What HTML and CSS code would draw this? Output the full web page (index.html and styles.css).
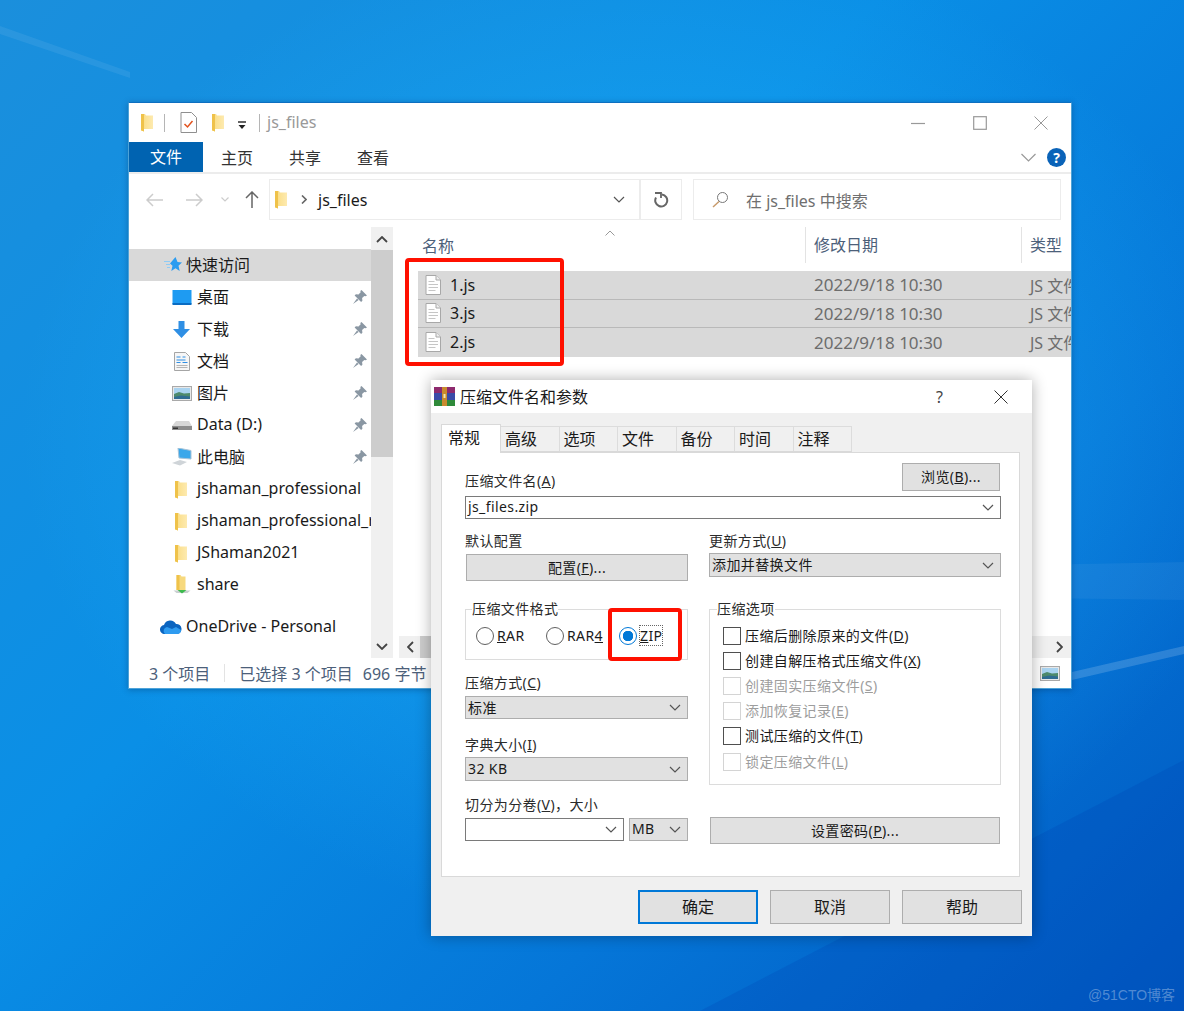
FILE: index.html
```html
<!DOCTYPE html>
<html lang="zh-CN">

<head>
    <meta charset="UTF-8">
    <title>js_files</title>
    <link rel="stylesheet" href="styles.css">
</head>

<body>
    <!-- shared icons -->
    <svg class="defs" width="0" height="0" aria-hidden="true">
        <defs>
            <linearGradient id="folderFill" x1="0" x2="1" y1="0" y2="0">
                <stop offset="0" stop-color="#f2c84e" />
                <stop offset="0.3" stop-color="#fbe08e" />
                <stop offset="1" stop-color="#fdeab0" />
            </linearGradient>
            <symbol id="folder" viewBox="0 0 14 19">
                <path d="M1 1h4l1 1.500h7v13.500H4v2.500l-3-1.300z" fill="url(#folderFill)" />
                <path d="M1 1h3v17.500l-3-1.300z" fill="#efc24a" />
            </symbol>
            <symbol id="pin" viewBox="0 0 14 14">
                <path d="M8.500 0l5.500 5.500-1.500.8-1.200-.4-2.200 2.200.3 2.600-1.300 1.300L1.600 5.500l1.300-1.300 2.600.3 2.200-2.200-.4-1.200zM4 8.400l1.600 1.600L0 14z" fill="#8a97a3" />
            </symbol>
            <symbol id="file" viewBox="0 0 16 20">
                <path d="M1 .5h10l4.500 4.500v14.500H1z" fill="#fff" stroke="#a8a8a8" />
                <path d="M11 .5V5h4.500" fill="#eee" stroke="#a8a8a8" />
                <path d="M3.500 6.500h6M3.500 9.500h9.500M3.500 12.500h9.500M3.500 15.500h7" stroke="#c6c6c6" />
            </symbol>
            <symbol id="picture" viewBox="0 0 20 15">
                <rect x="0.500" y="0.500" width="19" height="14" fill="#e8e8e8" stroke="#a9a9a9" />
                <rect x="2" y="2" width="16" height="11" fill="#a9d3f0" />
                <path d="M2 8l5-2 5 1.500 6-.5v6H2z" fill="#4e8a6c" />
                <path d="M2 11l7-1.500 9 1V13H2z" fill="#2f6c92" />
            </symbol>
            <symbol id="chev" viewBox="0 0 12 7">
                <path d="M1 1l5 5 5-5" fill="none" stroke="#555" stroke-width="1.200" />
            </symbol>
        </defs>
    </svg>

    <svg class="beams" viewBox="0 0 1184 1011" preserveAspectRatio="none" aria-hidden="true">
        <path d="M0 26L130 72V78L0 34z" fill="#fff" opacity="0.07" />
        <path d="M1072 672L1184 646V654L1072 680z" fill="#fff" opacity="0.16" />
        <path d="M1032 565L1184 562V600L1032 598z" fill="#fff" opacity="0.05" />
        <path d="M700 1011L1184 760V1011z" fill="#003fb0" opacity="0.22" />
    </svg>

    <!-- explorer window -->
    <section class="explorer">
        <header class="ex-title">
            <svg class="ic-folder" width="14" height="19"><use href="#folder" /></svg>
            <span class="ex-sep"></span>
            <svg class="ic-check" width="17" height="21" viewBox="0 0 17 21">
                <path d="M1 .5h10.500l5 5v15H1z" fill="#fff" stroke="#8f8f8f" />
                <path d="M4.500 12l3 3 5-6" fill="none" stroke="#e2521d" stroke-width="1.500" />
            </svg>
            <svg class="ic-folder2" width="14" height="19"><use href="#folder" /></svg>
            <svg class="ic-drop" width="10" height="10" viewBox="0 0 10 10">
                <path d="M1 2h8" stroke="#222" stroke-width="1.400" />
                <path d="M1.500 5h7L5 9z" fill="#222" />
            </svg>
            <span class="ex-sep ex-sep2"></span>
            <span class="ex-name">js_files</span>
            <div class="win-btns">
                <svg width="14" height="14" viewBox="0 0 14 14"><path d="M0 7.500h14" stroke="#999" stroke-width="1.200" /></svg>
                <svg width="14" height="14" viewBox="0 0 14 14"><rect x="0.700" y="0.700" width="12.600" height="12.600" fill="none" stroke="#999" stroke-width="1.200" /></svg>
                <svg width="14" height="14" viewBox="0 0 14 14"><path d="M.5.500l13 13M13.500.500l-13 13" stroke="#999" /></svg>
            </div>
        </header>

        <nav class="ribbon">
            <span class="ribbon-file">文件</span>
            <span class="ribbon-tab">主页</span>
            <span class="ribbon-tab">共享</span>
            <span class="ribbon-tab">查看</span>
            <svg class="ribbon-chev" width="15" height="9" viewBox="0 0 15 9"><path d="M.5 1l7 7 7-7" fill="none" stroke="#999" stroke-width="1.200" /></svg>
            <span class="help">?</span>
        </nav>

        <div class="toolbar">
            <svg class="nav-back" width="17" height="14" viewBox="0 0 17 14"><path d="M17 7H1M7 1L1 7l6 6" fill="none" stroke="#ccc" stroke-width="1.500" /></svg>
            <svg class="nav-fwd" width="17" height="14" viewBox="0 0 17 14"><path d="M0 7h16M10 1l6 6-6 6" fill="none" stroke="#ccc" stroke-width="1.500" /></svg>
            <svg class="nav-down" width="8" height="5" viewBox="0 0 8 5"><path d="M.5.500L4 4 7.500.500" fill="none" stroke="#ccc" stroke-width="1.200" /></svg>
            <svg class="nav-up" width="14" height="17" viewBox="0 0 14 17"><path d="M7 17V1M1 7l6-6 6 6" fill="none" stroke="#666" stroke-width="1.500" /></svg>
            <div class="addr">
                <svg width="14" height="19"><use href="#folder" /></svg>
                <svg class="addr-gt" width="6" height="9" viewBox="0 0 6 9"><path d="M1 .5l4 4-4 4" fill="none" stroke="#666" stroke-width="1.600" /></svg>
                <span class="addr-text">js_files</span>
                <svg class="addr-chev" width="12" height="7"><use href="#chev" /></svg>
                <span class="addr-refresh">
                    <svg width="16" height="16" viewBox="0 0 16 16"><path d="M9 2.500a6 6 0 1 1-6 3" fill="none" stroke="#666" stroke-width="2" /><path d="M2 1h6v5" fill="none" stroke="#666" stroke-width="1.800" /></svg>
                </span>
            </div>
            <div class="search">
                <svg width="17" height="17" viewBox="0 0 17 17"><circle cx="10.500" cy="6.500" r="5" fill="none" stroke="#777" /><path d="M7 10.500L1 16" stroke="#c79a6b" stroke-width="1.500" /></svg>
                <span>在 js_files 中搜索</span>
            </div>
        </div>

        <div class="ex-body">
            <aside class="sidebar">
                <div class="nav-row nav-quick">
                    <svg class="nav-ic" width="18" height="16" viewBox="0 0 18 16">
                        <path d="M11.500 0l2 5 4.500.5-3.500 3.300 1.200 5.200-4.200-2.700-4.200 2.700 1.200-5.200-2.500-2.300z" fill="#2b9cf0" />
                        <path d="M0 4.500h6M2 7.500h4M3 10.500h3" stroke="#8fcbf5" stroke-width="1.200" />
                    </svg>
                    <span>快速访问</span>
                </div>
                <div class="nav-row">
                    <svg class="nav-ic" width="19" height="15" viewBox="0 0 19 15"><rect width="19" height="14" fill="#1e9bf2" /><rect y="13" width="19" height="2" fill="#0a6cc2" /></svg>
                    <span>桌面</span>
                    <svg class="pin" width="14" height="14"><use href="#pin" /></svg>
                </div>
                <div class="nav-row">
                    <svg class="nav-ic" width="19" height="17" viewBox="0 0 19 17"><path d="M6 0h6v8h5.500L9 17 .5 8H6z" fill="#2f8fe4" /></svg>
                    <span>下载</span>
                    <svg class="pin" width="14" height="14"><use href="#pin" /></svg>
                </div>
                <div class="nav-row">
                    <svg class="nav-ic" width="19" height="19" viewBox="0 0 19 19"><path d="M2 .5h11l4 4v14H2z" fill="#f6f6f6" stroke="#a5a5a5" /><path d="M4 5h4M10 5h3M4 8h9M10 10.500h5M4 10.500h4" stroke="#2f8fe4" /><path d="M4 13.500h11M4 15.500h11" stroke="#b5b5b5" /></svg>
                    <span>文档</span>
                    <svg class="pin" width="14" height="14"><use href="#pin" /></svg>
                </div>
                <div class="nav-row">
                    <svg class="nav-ic" width="20" height="15"><use href="#picture" /></svg>
                    <span>图片</span>
                    <svg class="pin" width="14" height="14"><use href="#pin" /></svg>
                </div>
                <div class="nav-row">
                    <svg class="nav-ic" width="20" height="11" viewBox="0 0 20 11"><path d="M4 1h13l3 5H0z" fill="#d7d7d7" /><path d="M0 6h20v4H0z" fill="#8d8d8d" /><path d="M1 7.500h5v1.500H1z" fill="#333" /></svg>
                    <span>Data (D:)</span>
                    <svg class="pin" width="14" height="14"><use href="#pin" /></svg>
                </div>
                <div class="nav-row">
                    <svg class="nav-ic" width="20" height="18" viewBox="0 0 20 18"><path d="M6 0l13 2.500V11L7 10z" fill="#3aa7ea" stroke="#a8c4d8" /><path d="M0 15l8-3 7 2-7 3.500z" fill="#cfd4d8" /></svg>
                    <span>此电脑</span>
                    <svg class="pin" width="14" height="14"><use href="#pin" /></svg>
                </div>
                <div class="nav-row">
                    <svg class="nav-ic nav-ic-folder" width="14" height="19"><use href="#folder" /></svg>
                    <span>jshaman_professional</span>
                </div>
                <div class="nav-row">
                    <svg class="nav-ic nav-ic-folder" width="14" height="19"><use href="#folder" /></svg>
                    <span>jshaman_professional_r</span>
                </div>
                <div class="nav-row">
                    <svg class="nav-ic nav-ic-folder" width="14" height="19"><use href="#folder" /></svg>
                    <span>JShaman2021</span>
                </div>
                <div class="nav-row">
                    <svg class="nav-ic" width="17" height="20" viewBox="0 0 17 20"><path d="M3 0h4l1 1.500h4V15H3z" fill="#f7d97e" /><path d="M3 0h3v15H3z" fill="#efc24a" /><path d="M0 15.500l8.500 0 8.500 0-3 2.500H3z" fill="#c9cfd0" /><path d="M4 15h9l-4.500 3.500z" fill="#3dba4e" /></svg>
                    <span>share</span>
                </div>
                <div class="nav-row nav-drive">
                    <svg class="nav-ic" width="22" height="14" viewBox="0 0 22 14"><path d="M5 14a4.500 4.500 0 0 1-1-9 6.500 6.500 0 0 1 12-1 5 5 0 0 1 1 10z" fill="#0a64c0" /><path d="M5 14a4 4 0 0 1 2-7l5 2 4-2 5 3a4 4 0 0 1-4 4z" fill="#2e9bf0" /></svg>
                    <span>OneDrive - Personal</span>
                </div>
            </aside>

            <div class="vscroll">
                <svg width="12" height="7" viewBox="0 0 12 7"><path d="M1 6l5-5 5 5" fill="none" stroke="#444" stroke-width="1.800" /></svg>
                <div class="vthumb"></div>
                <svg class="vscroll-end" width="12" height="7" viewBox="0 0 12 7"><path d="M1 1l5 5 5-5" fill="none" stroke="#444" stroke-width="1.800" /></svg>
            </div>

            <main class="filelist">
                <div class="list-head">
                    <div class="col-name">
                        <svg class="sort-caret" width="10" height="6" viewBox="0 0 10 6"><path d="M.5 5.500L5 1l4.500 4.500" fill="none" stroke="#999" /></svg>
                        名称
                    </div>
                    <div class="col-date">修改日期</div>
                    <div class="col-type">类型</div>
                </div>
                <div class="rows">
                    <div class="file-row">
                        <div class="file-name"><svg width="16" height="20"><use href="#file" /></svg>1.js</div>
                        <div class="file-meta file-date">2022/9/18 10:30</div>
                        <div class="file-meta">JS 文件</div>
                    </div>
                    <div class="file-row">
                        <div class="file-name"><svg width="16" height="20"><use href="#file" /></svg>3.js</div>
                        <div class="file-meta file-date">2022/9/18 10:30</div>
                        <div class="file-meta">JS 文件</div>
                    </div>
                    <div class="file-row">
                        <div class="file-name"><svg width="16" height="20"><use href="#file" /></svg>2.js</div>
                        <div class="file-meta file-date">2022/9/18 10:30</div>
                        <div class="file-meta">JS 文件</div>
                    </div>
                </div>
                <div class="hscroll">
                    <svg width="7" height="12" viewBox="0 0 7 12"><path d="M6 1L1 6l5 5" fill="none" stroke="#444" stroke-width="1.800" /></svg>
                    <div class="hthumb"></div>
                    <svg width="7" height="12" viewBox="0 0 7 12"><path d="M1 1l5 5-5 5" fill="none" stroke="#444" stroke-width="1.800" /></svg>
                </div>
            </main>
        </div>

        <footer class="status">
            <span class="status-count">3 个项目</span>
            <span class="status-sep"></span>
            <span>已选择 3 个项目</span>
            <span class="status-size">696 字节</span>
            <svg class="status-view" width="20" height="15"><use href="#picture" /></svg>
        </footer>
    </section>

    <!-- winrar dialog -->
    <section class="dialog">
        <header class="dlg-title">
            <svg width="21" height="19" viewBox="0 0 21 19">
                <rect width="21" height="6" fill="#8e2a6e" />
                <rect y="6" width="21" height="7" fill="#3a4aa8" />
                <rect y="13" width="21" height="6" fill="#2f8a3a" />
                <rect x="8" width="5" height="19" fill="#c98a2e" />
                <rect x="9.500" y="7" width="2" height="4" fill="#f3e6b0" />
            </svg>
            <span class="dlg-name">压缩文件名和参数</span>
            <span class="dlg-help">?</span>
            <svg class="dlg-close" width="14" height="14" viewBox="0 0 14 14"><path d="M.5.500l13 13M13.500.500l-13 13" stroke="#333" /></svg>
        </header>

        <div class="tabs">
            <span class="tab tab-on">常规</span>
            <span class="tab">高级</span>
            <span class="tab">选项</span>
            <span class="tab">文件</span>
            <span class="tab">备份</span>
            <span class="tab">时间</span>
            <span class="tab">注释</span>
        </div>

        <div class="panel">
            <div class="name-head">
                <label class="lbl">压缩文件名(<u>A</u>)</label>
                <button class="btn btn-browse" type="button">浏览(<u>B</u>)...</button>
            </div>
            <div class="combo combo-name">
                <span>js_files.zip</span>
                <svg width="12" height="7"><use href="#chev" /></svg>
            </div>

            <div class="cols">
                <div class="col">
                    <label class="lbl">默认配置</label>
                    <button class="btn btn-config" type="button">配置(<u>F</u>)...</button>

                    <fieldset class="group group-format">
                        <legend>压缩文件格式</legend>
                        <div class="radios">
                            <span class="radio radio-rar"><i></i><span><u>R</u>AR</span></span>
                            <span class="radio radio-rar4"><i></i><span>RAR<u>4</u></span></span>
                            <span class="radio radio-on"><i></i><span class="focus"><u>Z</u>IP</span></span>
                        </div>
                    </fieldset>

                    <label class="lbl lbl-method">压缩方式(<u>C</u>)</label>
                    <div class="select sel-method">
                        <span>标准</span>
                        <svg width="12" height="7"><use href="#chev" /></svg>
                    </div>

                    <label class="lbl lbl-dict">字典大小(<u>I</u>)</label>
                    <div class="select sel-dict">
                        <span>32 KB</span>
                        <svg width="12" height="7"><use href="#chev" /></svg>
                    </div>

                    <label class="lbl lbl-split">切分为分卷(<u>V</u>)，大小</label>
                    <div class="split-row">
                        <div class="combo combo-split">
                            <span></span>
                            <svg width="12" height="7"><use href="#chev" /></svg>
                        </div>
                        <div class="select sel-unit">
                            <span>MB</span>
                            <svg width="12" height="7"><use href="#chev" /></svg>
                        </div>
                    </div>
                </div>

                <div class="col">
                    <label class="lbl">更新方式(<u>U</u>)</label>
                    <div class="select sel-update">
                        <span>添加并替换文件</span>
                        <svg width="12" height="7"><use href="#chev" /></svg>
                    </div>

                    <fieldset class="group group-options">
                        <legend>压缩选项</legend>
                        <div class="check"><i></i><span>压缩后删除原来的文件(<u>D</u>)</span></div>
                        <div class="check"><i></i><span>创建自解压格式压缩文件(<u>X</u>)</span></div>
                        <div class="check check-off"><i></i><span>创建固实压缩文件(<u>S</u>)</span></div>
                        <div class="check check-off"><i></i><span>添加恢复记录(<u>E</u>)</span></div>
                        <div class="check"><i></i><span>测试压缩的文件(<u>T</u>)</span></div>
                        <div class="check check-off"><i></i><span>锁定压缩文件(<u>L</u>)</span></div>
                    </fieldset>

                    <button class="btn btn-password" type="button">设置密码(<u>P</u>)...</button>
                </div>
            </div>
        </div>

        <div class="dlg-actions">
            <button class="btn btn-action btn-primary" type="button">确定</button>
            <button class="btn btn-action" type="button">取消</button>
            <button class="btn btn-action" type="button">帮助</button>
        </div>
    </section>

    <!-- red annotations drawn over the screenshot -->
    <div class="mark mark-files"></div>
    <div class="mark mark-zip"></div>

    <div class="watermark">@51CTO博客</div>
</body>

</html>
```

FILE: styles.css
```css
/* Reset and base */
* {
    margin: 0;
    padding: 0;
    box-sizing: border-box;
}

html,
body {
    width: 1184px;
    height: 1011px;
    overflow: hidden;
}

body {
    position: relative;
    font-family: "Noto Sans", "Noto Sans CJK SC", sans-serif;
    font-size: 16px;
    color: #1a1a1a;
    background:
        radial-gradient(ellipse 620px 500px at 640px 430px, rgba(40, 190, 255, 0.55), rgba(40, 190, 255, 0) 100%),
        linear-gradient(135deg, #1b8fdc 0%, #0a8fe6 40%, #0576d8 70%, #0058c0 100%);
}

button {
    font-family: inherit;
    color: inherit;
}

.defs {
    position: absolute;
}

.beams {
    position: absolute;
    left: 0;
    top: 0;
    width: 1184px;
    height: 1011px;
}

/* Explorer window */
.explorer {
    position: absolute;
    left: 128px;
    top: 102px;
    width: 944px;
    height: 587px;
    display: flex;
    flex-direction: column;
    background: #fff;
    border: 1px solid #4ea3d8;
    border-top-color: #0d6fc0;
    box-shadow: 0 1px 6px rgba(0, 40, 90, 0.35);
}

.ex-title {
    height: 39px;
    flex: none;
    display: flex;
    align-items: center;
    padding-left: 11px;
}

.ex-sep {
    width: 1px;
    height: 18px;
    margin-left: 10px;
    background: #b5b5b5;
}

.ex-sep2 {
    margin-left: 12px;
}

.ic-check {
    margin-left: 15px;
}

.ic-folder2 {
    margin-left: 14px;
}

.ic-drop {
    margin-left: 12px;
    margin-top: 4px;
}

.ex-name {
    margin-left: 7px;
    margin-top: -2px;
    color: #999;
}

.win-btns {
    margin-left: auto;
    margin-right: 23px;
    display: flex;
    gap: 47.500px;
}

.ribbon {
    height: 30px;
    flex: none;
    display: flex;
    align-items: center;
}

.ribbon-file {
    width: 74px;
    height: 30px;
    line-height: 30px;
    text-align: center;
    color: #fff;
    background: #0063b1;
}

.ribbon-tab {
    margin-left: 18px;
    margin-right: 18px;
    color: #333;
}

.ribbon-chev {
    margin-left: auto;
}

.help {
    width: 19px;
    height: 19px;
    margin: 0 5px 0 11px;
    border-radius: 50%;
    background: #0a63b8;
    color: #fff;
    font-size: 14px;
    font-weight: 700;
    line-height: 19px;
    text-align: center;
}

.toolbar {
    height: 55px;
    flex: none;
    display: flex;
    align-items: center;
    border-top: 2px solid #ececec;
    padding-bottom: 2px;
}

.nav-back {
    margin-left: 17px;
}

.nav-fwd {
    margin-left: 23px;
}

.nav-down {
    margin-left: 18px;
}

.nav-up {
    margin-left: 16px;
}

.addr {
    width: 413px;
    height: 41px;
    margin-left: 10px;
    display: flex;
    align-items: center;
    padding-left: 4px;
    border: 1.500px solid #ececec;
}

.addr-gt {
    margin-left: 13px;
}

.addr-text {
    margin-left: 11px;
}

.addr-chev {
    margin-left: auto;
}

.addr-refresh {
    width: 42px;
    height: 100%;
    margin-left: 14px;
    display: flex;
    align-items: center;
    justify-content: center;
    border-left: 2px solid #ececec;
}

.search {
    width: 368px;
    height: 41px;
    margin-left: 11px;
    display: flex;
    align-items: center;
    gap: 17px;
    padding-left: 18px;
    border: 1.500px solid #ececec;
    color: #6f6f6f;
}

.ex-body {
    flex: 1;
    min-height: 0;
    display: flex;
}

/* Navigation pane */
.sidebar {
    width: 242px;
    flex: none;
    padding-top: 22px;
    overflow: hidden;
}

.nav-row {
    height: 32px;
    display: flex;
    align-items: center;
    padding-left: 43px;
    white-space: nowrap;
    color: #1a1a1a;
}

.nav-row span {
    position: relative;
    top: -1px;
}

.nav-ic {
    width: 20px;
    margin-right: 5px;
    flex: none;
}

.nav-ic-folder {
    width: 14px;
    margin-left: 2px;
    margin-right: 9px;
}

.pin {
    margin-left: auto;
    margin-right: 4px;
    flex: none;
}

.nav-quick {
    padding-left: 35px;
    background: #d9d9d9;
}

.nav-quick .nav-ic {
    width: 18px;
    margin-right: 4px;
}

.nav-drive {
    margin-top: 10px;
    padding-left: 31px;
}

.nav-drive .nav-ic {
    width: 22px;
    margin-right: 4px;
}

.vscroll {
    width: 22px;
    flex: none;
    display: flex;
    flex-direction: column;
    align-items: center;
    padding-top: 9px;
    background: #f0f0f0;
}

.vthumb {
    width: 100%;
    height: 207px;
    margin-top: 7px;
    background: #cdcdcd;
}

.vscroll-end {
    margin-top: auto;
    margin-bottom: 8px;
}

/* File list */
.filelist {
    flex: 1;
    min-width: 0;
    display: flex;
    flex-direction: column;
    overflow: hidden;
}

.list-head,
.file-row {
    display: grid;
    grid-template-columns: 387px 216px 1fr;
    margin-left: 25px;
}

.list-head {
    height: 36px;
    align-items: center;
    color: #4c607a;
    margin-bottom: 8px;
}

.col-name {
    position: relative;
    padding-left: 4px;
    padding-bottom: 1px;
}

.sort-caret {
    position: absolute;
    left: 187px;
    top: -3px;
}

.col-date,
.col-type {
    height: 36px;
    line-height: 36px;
    padding-left: 8px;
    border-left: 1px solid #e3e3e3;
}

.rows {
    flex: 1;
}

.file-row {
    height: 28.500px;
    align-items: center;
    background: #d9d9d9;
    border-bottom: 1px solid #b9b9b9;
    white-space: nowrap;
}

.file-row:last-child {
    border-bottom: 0;
}

.file-name {
    display: flex;
    align-items: center;
    gap: 9px;
    padding-left: 7px;
}

.file-meta {
    padding-left: 9px;
    color: #6d6d6d;
}

.file-date {
    font-size: 17px;
}

.hscroll {
    height: 22px;
    flex: none;
    display: flex;
    align-items: center;
    justify-content: space-between;
    margin-left: 6px;
    padding: 0 8px;
    background: #f0f0f0;
}

.hthumb {
    flex: 1;
    height: 100%;
    margin: 0 auto 0 6px;
    background: #cdcdcd;
    max-width: 12px;
}

.status {
    height: 30px;
    flex: none;
    display: flex;
    align-items: center;
    padding-left: 20px;
    color: #4c607a;
}

.status-sep {
    width: 1px;
    height: 18px;
    margin: 0 14px;
    background: #e3e3e3;
}

.status-size {
    margin-left: 10px;
}

.status-view {
    margin-left: auto;
    margin-right: 11px;
}

/* WinRAR dialog */
.dialog {
    position: absolute;
    left: 431px;
    top: 380px;
    width: 601px;
    height: 556px;
    background: #f0f0f0;
    box-shadow: 0 0 14px rgba(0, 0, 0, 0.32);
    font-size: 14px;
    letter-spacing: 0.400px;
}

.dlg-title {
    height: 33px;
    display: flex;
    align-items: center;
    padding-left: 3px;
    background: #fff;
    letter-spacing: 0;
}

.dlg-name {
    margin-left: 5px;
    margin-top: -2px;
    font-size: 16px;
}

.dlg-help {
    margin-left: auto;
    font-size: 16px;
    color: #444;
}

.dlg-close {
    margin-left: 51px;
    margin-right: 24px;
}

.tabs {
    height: 28px;
    margin: 11px 0 0 10px;
    display: flex;
    align-items: flex-end;
    position: relative;
    z-index: 1;
    letter-spacing: 0;
}

.tab {
    width: 58.500px;
    height: 26px;
    line-height: 25px;
    padding-left: 4px;
    font-size: 16px;
    background: #f0f0f0;
    border: 1px solid #dcdcdc;
    border-left: 0;
    border-bottom: 1px solid #d9d9d9;
}

.tab-on {
    width: 60px;
    height: 29px;
    line-height: 26px;
    margin-bottom: -1px;
    padding-left: 6px;
    background: #fff;
    border: 1px solid #d9d9d9;
    border-bottom: 0;
}

.panel {
    width: 579px;
    height: 425px;
    margin-left: 10px;
    padding: 10px 18px 0 23px;
    background: #fff;
    border: 1px solid #d9d9d9;
}

.lbl {
    display: block;
    height: 20px;
    line-height: 20px;
    white-space: nowrap;
    color: #2a2a2a;
}

.name-head {
    display: flex;
    align-items: flex-end;
    justify-content: space-between;
    height: 28px;
}

.btn {
    display: block;
    padding-bottom: 2px;
    font-size: 14px;
    letter-spacing: inherit;
    background: #e1e1e1;
    border: 1px solid #adadad;
}

.btn-browse {
    width: 98px;
    height: 28px;
    margin-right: 1px;
}

.combo,
.select {
    display: flex;
    align-items: center;
    justify-content: space-between;
    padding: 0 6px 0 2px;
    white-space: nowrap;
}

.combo span,
.select span {
    position: relative;
    top: -1px;
}

.combo {
    background: #fff;
    border: 1px solid #7a7a7a;
}

.select {
    background: #e1e1e1;
    border: 1px solid #adadad;
}

.combo-name {
    height: 23px;
    margin-top: 5px;
}

.cols {
    display: grid;
    grid-template-columns: 223px 292px;
    gap: 21px;
    margin-top: 12px;
}

.btn-config {
    width: 222px;
    height: 27px;
    margin: 3px 0 0 1px;
}

/* Group boxes */
.group {
    border: 1px solid #dcdcdc;
}

.group legend {
    height: 20px;
    line-height: 20px;
    color: #2a2a2a;
}

.group-format {
    height: 61px;
    margin-top: 18px;
    padding: 0 0 0 10px;
}

.group-format legend {
    margin-left: -4px;
}

.radios {
    display: flex;
    height: 34px;
    align-items: center;
}

.radio {
    display: flex;
    align-items: center;
    gap: 3px;
}

.radio span {
    position: relative;
    top: -1px;
}

.radio-rar {
    width: 70px;
}

.radio-rar4 {
    width: 73px;
}

.radio i {
    width: 18px;
    height: 18px;
    flex: none;
    border-radius: 50%;
    background: #fff;
    border: 1px solid #5f5f5f;
}

.radio-on i {
    border-color: #0078d7;
    background: radial-gradient(circle, #0078d7 0, #0078d7 5px, #fff 5.500px);
}

.focus {
    outline: 1px dotted #666;
}

.lbl-method {
    margin-top: 13px;
}

.sel-method {
    height: 23px;
    margin-top: 3px;
}

.lbl-dict {
    margin-top: 16px;
}

.sel-dict {
    height: 24px;
    margin-top: 2px;
}

.lbl-split {
    margin-top: 14px;
}

.split-row {
    display: flex;
    gap: 5px;
    margin-top: 3px;
}

.combo-split {
    width: 159px;
    height: 23px;
}

.sel-unit {
    width: 59px;
    height: 23px;
}

.sel-update {
    height: 24px;
    margin-top: 2px;
}

.group-options {
    height: 186px;
    margin-top: 22px;
    padding: 4px 0 0 13px;
}

.group-options legend {
    margin-left: -6px;
}

.check {
    height: 25.200px;
    display: flex;
    align-items: center;
    gap: 4px;
    color: #1a1a1a;
}

.check span {
    position: relative;
    top: -1px;
}

.check i {
    width: 18px;
    height: 18px;
    flex: none;
    background: #fff;
    border: 1px solid #4f4f4f;
}

.check-off {
    color: #9d9d9d;
}

.check-off i {
    border-color: #d4d4d4;
}

.btn-password {
    width: 290px;
    height: 27px;
    margin: 32px 0 0 1px;
}

.dlg-actions {
    display: flex;
    justify-content: flex-end;
    gap: 12px;
    margin: 13px 10px 0 0;
    letter-spacing: 0;
}

.btn-action {
    width: 120px;
    height: 34px;
    font-size: 16px;
}

.btn-primary {
    border: 2px solid #0078d7;
}

/* Annotations */
.mark {
    position: absolute;
    border: 4px solid #ff1000;
    border-radius: 4px;
}

.mark-files {
    left: 405px;
    top: 258px;
    width: 159px;
    height: 108px;
}

.mark-zip {
    left: 608px;
    top: 608px;
    width: 74px;
    height: 53px;
}

.watermark {
    position: absolute;
    left: 1088px;
    top: 984px;
    font-family: "Liberation Sans", "Noto Sans CJK SC", sans-serif;
    font-size: 14px;
    color: rgba(255, 255, 255, 0.32);
    white-space: nowrap;
}
```
